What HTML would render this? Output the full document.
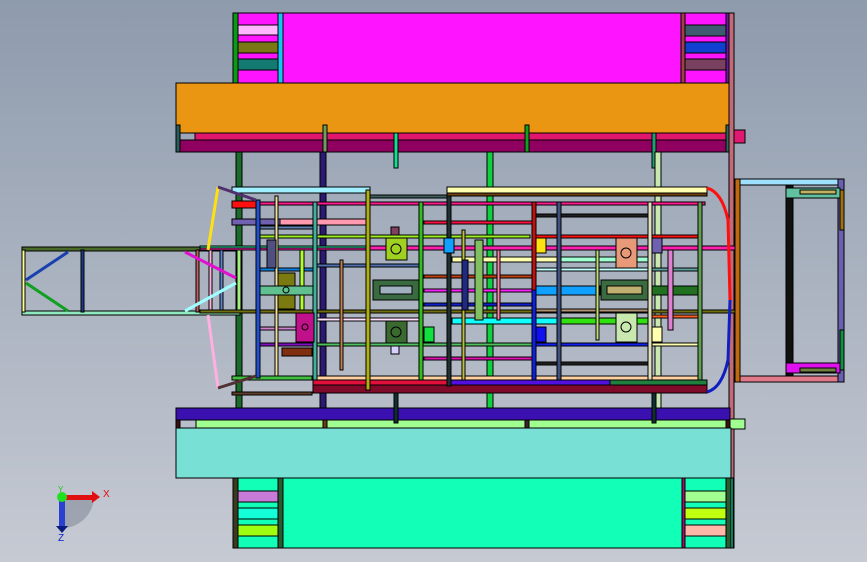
<!DOCTYPE html>
<html><head><meta charset="utf-8"><style>
html,body{margin:0;padding:0;}
body{width:867px;height:562px;overflow:hidden;background:linear-gradient(#8e9bad,#c6cad3);font-family:"Liberation Sans",sans-serif;}
svg{position:absolute;left:0;top:0;}
</style></head><body>
<svg width="867" height="562" viewBox="0 0 867 562">
<g stroke="#000" stroke-width="1">
<rect x="233" y="13" width="500" height="70" fill="#ff14ff"/>
<rect x="233" y="13" width="5" height="72" fill="#0a9a14"/>
<rect x="238" y="25" width="40" height="10" fill="#ffb8ff"/>
<rect x="238" y="42" width="40" height="11" fill="#7a7814"/>
<rect x="238" y="59" width="40" height="11" fill="#127a70"/>
<rect x="278" y="13" width="5" height="70" fill="#10c8f0"/>
<rect x="681" y="13" width="4" height="70" fill="#a04040"/>
<rect x="685" y="25" width="41" height="11" fill="#3e5a70"/>
<rect x="685" y="42" width="41" height="11" fill="#1040d0"/>
<rect x="685" y="59" width="41" height="11" fill="#7a4060"/>
<rect x="726" y="13" width="5" height="70" fill="#6a1aa0"/>
<rect x="176" y="83" width="554" height="50" fill="#ea9612"/>
<rect x="195" y="133" width="535" height="7" fill="#e0166e"/>
<rect x="176" y="140" width="554" height="12" fill="#900060"/>
<rect x="730" y="130" width="15" height="13" fill="#e01a70"/>
<rect x="176" y="125" width="4" height="27" fill="#2a5a5a"/>
<rect x="323" y="125" width="4" height="27" fill="#6aa060"/>
<rect x="525" y="125" width="4" height="27" fill="#10a020"/>
<rect x="726" y="125" width="4" height="27" fill="#2a6a60"/>
<rect x="394" y="133" width="4" height="35" fill="#10e090"/>
<rect x="652" y="133" width="4" height="35" fill="#20a070"/>
</g>
<rect x="729" y="13" width="5" height="535" fill="#c06a7a" stroke="#000" stroke-width="1"/>
<g stroke="#000" stroke-width="1">
<rect x="236" y="152" width="6" height="256" fill="#1a6a2a"/>
<rect x="320" y="152" width="6" height="256" fill="#2a1a70"/>
<rect x="487" y="152" width="6" height="256" fill="#10d040"/>
<rect x="655" y="152" width="6" height="256" fill="#c8e8b0"/>
</g>
<g stroke="#000" stroke-width="1">
<rect x="22" y="247" width="218" height="4" fill="#4a6a2a"/>
<rect x="22" y="311" width="218" height="4" fill="#90e8c0"/>
<rect x="22" y="250" width="3" height="62" fill="#ffff90"/>
<rect x="81" y="250" width="3" height="62" fill="#1a3a8a"/>
<rect x="196" y="250" width="3" height="62" fill="#c06060"/>
<rect x="209" y="250" width="3" height="62" fill="#ffb0e0"/>
<rect x="220" y="250" width="3" height="62" fill="#6080d0"/>
<rect x="237" y="250" width="4" height="62" fill="#a0f080"/>
</g>
<g stroke-width="3" fill="none">
<line x1="26" y1="280" x2="68" y2="252" stroke="#1a40b0"/>
<line x1="26" y1="283" x2="68" y2="311" stroke="#10a020"/>
<line x1="185" y1="252" x2="236" y2="278" stroke="#e010d0"/>
<line x1="185" y1="311" x2="236" y2="283" stroke="#a0ffff"/>
</g>
<g stroke="#000" stroke-width="1">
<rect x="232" y="187" width="138" height="6" fill="#a0f0ff"/>
<rect x="370" y="195" width="77" height="3" fill="#406060"/>
<rect x="447" y="187" width="260" height="6" fill="#ffffb0"/>
<rect x="447" y="193" width="260" height="3" fill="#704010"/>
<rect x="232" y="202" width="473" height="3" fill="#ff1a90"/>
<rect x="232" y="201" width="28" height="7" fill="#ff1010"/>
<rect x="232" y="219" width="134" height="6" fill="#ff9ab0"/>
<rect x="232" y="219" width="48" height="6" fill="#7060b0"/>
<rect x="424" y="221" width="108" height="3" fill="#ff1040"/>
<rect x="536" y="214" width="113" height="3" fill="#202020"/>
<rect x="258" y="235" width="272" height="3" fill="#a0f020"/>
<rect x="536" y="235" width="164" height="3" fill="#ff1010"/>
<rect x="258" y="226" width="55" height="3" fill="#6080b0"/>
<rect x="200" y="246" width="535" height="4" fill="#ff20b0"/>
<rect x="200" y="246" width="170" height="2" fill="#30e0a0"/>
<rect x="317" y="264" width="102" height="3" fill="#5070b0"/>
<rect x="258" y="268" width="55" height="3" fill="#1080e0"/>
<rect x="452" y="257" width="105" height="5" fill="#ffffb0"/>
<rect x="560" y="257" width="88" height="5" fill="#a0ffd0"/>
<rect x="536" y="268" width="112" height="3" fill="#c0ffff"/>
<rect x="652" y="268" width="48" height="3" fill="#60a0a0"/>
<rect x="424" y="275" width="108" height="3" fill="#c04010"/>
<rect x="424" y="289" width="108" height="3" fill="#ff20ff"/>
<rect x="536" y="286" width="64" height="9" fill="#10a0ff"/>
<rect x="650" y="286" width="50" height="9" fill="#207020"/>
<rect x="424" y="303" width="108" height="3" fill="#1020d0"/>
<rect x="200" y="310" width="535" height="3" fill="#707010"/>
<rect x="536" y="309" width="112" height="3" fill="#b09070"/>
<rect x="652" y="315" width="48" height="3" fill="#ff6020"/>
<rect x="452" y="318" width="105" height="6" fill="#10ffff"/>
<rect x="560" y="318" width="90" height="6" fill="#30e010"/>
<rect x="317" y="318" width="103" height="3" fill="#ffe0ff"/>
<rect x="258" y="327" width="55" height="3" fill="#d080d0"/>
<rect x="258" y="343" width="55" height="3" fill="#8010c0"/>
<rect x="317" y="343" width="215" height="3" fill="#50c060"/>
<rect x="535" y="343" width="115" height="3" fill="#1020f0"/>
<rect x="650" y="343" width="50" height="3" fill="#ffffb0"/>
<rect x="424" y="357" width="108" height="3" fill="#e010b0"/>
<rect x="536" y="362" width="112" height="3" fill="#202020"/>
<rect x="317" y="376" width="383" height="4" fill="#ffd0a0"/>
<rect x="232" y="376" width="80" height="4" fill="#40c040"/>
<rect x="313" y="380" width="394" height="5" fill="#e0103a"/>
<rect x="450" y="380" width="160" height="5" fill="#5010e0"/>
<rect x="610" y="380" width="97" height="5" fill="#208040"/>
<rect x="313" y="385" width="394" height="8" fill="#800a2a"/>
<rect x="232" y="392" width="80" height="3" fill="#60402a"/>
<rect x="256" y="200" width="4" height="178" fill="#2050d0"/>
<rect x="313" y="202" width="4" height="178" fill="#40b0a0"/>
<rect x="366" y="190" width="4" height="200" fill="#b0b010"/>
<rect x="419" y="202" width="4" height="178" fill="#30c020"/>
<rect x="447" y="196" width="4" height="190" fill="#203030"/>
<rect x="532" y="202" width="4" height="178" fill="#c01010"/>
<rect x="532" y="290" width="4" height="90" fill="#1020e0"/>
<rect x="557" y="202" width="4" height="178" fill="#405080"/>
<rect x="648" y="202" width="4" height="178" fill="#e0e0c0"/>
<rect x="698" y="202" width="4" height="178" fill="#60a050"/>
<rect x="275" y="196" width="3" height="180" fill="#f0e0a0"/>
<rect x="300" y="250" width="4" height="60" fill="#b0ff30"/>
<rect x="340" y="260" width="3" height="110" fill="#c08050"/>
<rect x="462" y="230" width="3" height="150" fill="#c0c040"/>
<rect x="475" y="240" width="8" height="80" fill="#80c060"/>
<rect x="462" y="260" width="6" height="50" fill="#202a80"/>
<rect x="497" y="250" width="3" height="70" fill="#ff80a0"/>
<rect x="596" y="250" width="3" height="90" fill="#c0e070"/>
<rect x="668" y="250" width="5" height="80" fill="#e080d0"/>
<rect x="386" y="238" width="21" height="22" fill="#a0d020"/>
<rect x="616" y="238" width="21" height="30" fill="#e89a78"/>
<rect x="616" y="313" width="21" height="29" fill="#c8e8b0"/>
<rect x="386" y="321" width="21" height="22" fill="#3a6a30"/>
<rect x="296" y="313" width="18" height="29" fill="#c0108a"/>
<rect x="278" y="273" width="17" height="36" fill="#7a7a10"/>
<rect x="260" y="286" width="53" height="9" fill="#60c090"/>
<rect x="373" y="280" width="46" height="20" fill="#3a6a40"/>
<rect x="380" y="286" width="32" height="8" fill="#a0b0c0"/>
<rect x="601" y="280" width="47" height="20" fill="#3a6a40"/>
<rect x="607" y="286" width="35" height="8" fill="#c0b070"/>
<rect x="444" y="238" width="10" height="15" fill="#10a0ff"/>
<rect x="536" y="238" width="10" height="15" fill="#ffe010"/>
<rect x="652" y="238" width="10" height="15" fill="#7060b0"/>
<rect x="424" y="327" width="10" height="15" fill="#10e040"/>
<rect x="536" y="327" width="10" height="15" fill="#1010f0"/>
<rect x="652" y="327" width="10" height="15" fill="#ffffb0"/>
<rect x="267" y="240" width="9" height="28" fill="#505080"/>
<rect x="391" y="227" width="8" height="8" fill="#804060"/>
<rect x="391" y="346" width="8" height="8" fill="#d8d0ff"/>
<rect x="282" y="348" width="30" height="8" fill="#803010"/>
<circle cx="396" cy="249" r="5" fill="#a0d020"/>
<circle cx="626" cy="253" r="5" fill="#e89a78"/>
<circle cx="626" cy="327" r="5" fill="#c8e8b0"/>
<circle cx="396" cy="332" r="5" fill="#3a6a30"/>
<circle cx="305" cy="327" r="3" fill="#c0108a"/>
<circle cx="286" cy="290" r="3" fill="#60c090"/>
</g>
<g fill="none" stroke-width="3">
<path d="M218 187 L208 250" stroke="#ffe010"/>
<path d="M218 187 L256 200" stroke="#503070"/>
<path d="M208 315 L218 388" stroke="#ffb0e0"/>
<path d="M218 388 L256 376" stroke="#503030"/>
<path d="M707 188 Q722 192 728 220 L730 300" stroke="#ff1010"/>
<path d="M730 300 L728 360 Q722 388 707 392" stroke="#1020c0"/>
</g>
<g stroke="#000" stroke-width="1">
<rect x="735" y="179" width="109" height="6" fill="#a0e0ff"/>
<rect x="735" y="376" width="109" height="6" fill="#e07a8a"/>
<rect x="735" y="179" width="5" height="203" fill="#c06a10"/>
<rect x="838" y="179" width="6" height="203" fill="#6a60b0"/>
<rect x="786" y="185" width="7" height="191" fill="#111"/>
<rect x="786" y="188" width="54" height="10" fill="#60c0a0"/>
<rect x="800" y="190" width="36" height="4" fill="#c0b060"/>
<rect x="786" y="363" width="54" height="10" fill="#e010f0"/>
<rect x="800" y="368" width="36" height="4" fill="#708040"/>
<rect x="840" y="190" width="4" height="40" fill="#a07010"/>
<rect x="840" y="330" width="4" height="40" fill="#109040"/>
</g>
<g stroke="#000" stroke-width="1">
<rect x="176" y="408" width="554" height="12" fill="#3a10b0"/>
<rect x="196" y="420" width="534" height="8" fill="#a0ff90"/>
<rect x="730" y="419" width="15" height="10" fill="#a0ff90"/>
<rect x="176" y="420" width="4" height="17" fill="#401010"/>
<rect x="323" y="420" width="4" height="17" fill="#703a10"/>
<rect x="525" y="420" width="4" height="17" fill="#402030"/>
<rect x="726" y="420" width="4" height="17" fill="#401010"/>
<rect x="394" y="393" width="4" height="30" fill="#103030"/>
<rect x="652" y="393" width="4" height="30" fill="#103030"/>
<rect x="176" y="428" width="555" height="50" fill="#78e0d4"/>
<rect x="233" y="478" width="500" height="70" fill="#12ffb8"/>
<rect x="233" y="478" width="5" height="70" fill="#3a3a20"/>
<rect x="238" y="491" width="40" height="11" fill="#c87ad8"/>
<rect x="238" y="508" width="40" height="11" fill="#12ffd8"/>
<rect x="238" y="525" width="40" height="11" fill="#a0ff10"/>
<rect x="278" y="478" width="5" height="70" fill="#2a5a30"/>
<rect x="682" y="478" width="3" height="70" fill="#a01070"/>
<rect x="685" y="491" width="41" height="11" fill="#a0ff90"/>
<rect x="685" y="508" width="41" height="11" fill="#c0ff10"/>
<rect x="685" y="525" width="41" height="11" fill="#ffb8a8"/>
<rect x="726" y="478" width="5" height="70" fill="#2a5a30"/>
</g>
<path d="M62 496 L62 528 A32 32 0 0 0 94 496 Z" fill="#7a8090" opacity="0.5"/>
<rect x="61" y="495" width="32" height="5" fill="#e01010"/>
<path d="M92 491 L100 497 L92 503 Z" fill="#e01010"/>
<rect x="59" y="497" width="6" height="30" fill="#2a40d0"/>
<path d="M56 526 L68 526 L62 533 Z" fill="#0a1a80"/>
<circle cx="62" cy="497" r="5" fill="#20e020"/>
<text x="103" y="497" font-size="10" fill="#e01010" font-family="Liberation Sans, sans-serif">X</text>
<text x="58" y="541" font-size="10" fill="#1020d0" font-family="Liberation Sans, sans-serif">Z</text>
<text x="58" y="492" font-size="8" fill="#20c020" font-family="Liberation Sans, sans-serif">Y</text>
</svg>
</body></html>
